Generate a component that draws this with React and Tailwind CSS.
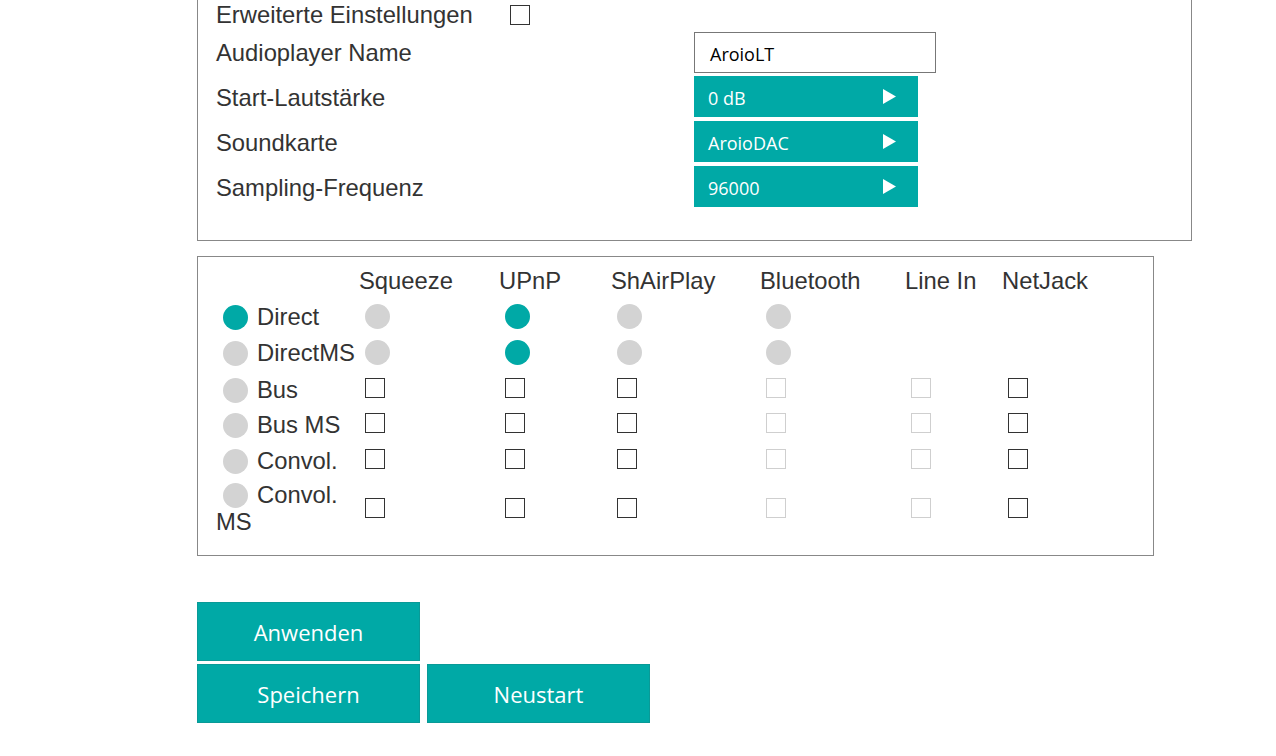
import React from 'react';

// Aroio settings panel: player options, routing matrix, action buttons

const TEAL = 'bg-[#00a9a6]';

function Box({ disabled }) {
  return (
    <span
      className={`block w-[20px] h-[20px] ml-[6px] bg-white border ${disabled ? 'border-[#cfcfcf]' : 'border-[#333]'}`}
    />
  );
}

function Dot({ on, className = '' }) {
  return (
    <span
      className={`inline-block w-[25px] h-[25px] rounded-full ${on ? TEAL : 'bg-[#d3d3d3]'} ${className}`}
    />
  );
}

function Select({ value }) {
  return (
    <div className={`w-[224px] h-[41px] ${TEAL} flex items-center justify-between pl-[14px] pr-[22px] text-white text-[18px]`}>
      <span className="pt-[3px]">{value}</span>
      <svg width="13" height="15" viewBox="0 0 13 15">
        <polygon points="0,0 13,7.5 0,15" fill="#fff" />
      </svg>
    </div>
  );
}

const cols = ['Squeeze', 'UPnP', 'ShAirPlay', 'Bluetooth', 'Line In', 'NetJack'];
// which columns are unavailable (greyed) for the checkbox rows
const greyed = [false, false, false, true, true, false];

const rows = [
  { name: 'Direct', on: true, kind: 'radio', radio: [false, true, false, false], h: 'h-[35px]' },
  { name: 'DirectMS', on: false, kind: 'radio', radio: [false, true, false, false], h: 'h-[36px]' },
  { name: 'Bus', on: false, kind: 'check', h: 'h-[35px]' },
  { name: 'Bus MS', on: false, kind: 'check', h: 'h-[36px]' },
  { name: 'Convol.', on: false, kind: 'check', h: 'h-[35px]' },
  { name: 'Convol. MS', on: false, kind: 'check', h: 'h-[64px]' },
];

export default function App() {
  const label = "text-[23.8px] text-[#333]";
  return (
    <div className="min-h-[756px] bg-white pl-[197px]" style={{ fontFamily: '"Liberation Sans", Arial, sans-serif' }}>
      {/* settings box, its top edge is scrolled off screen */}
      <div className="w-[995px] border-x border-b border-[#888] pl-[18px] pb-[33px]">
        <div className="h-[32px] flex items-center pb-[2px]">
          <span className={label}>Erweiterte Einstellungen</span>
          <span className="block w-[20px] h-[20px] border border-[#333] ml-[37px]" />
        </div>

        <div className="flex flex-col gap-[4px]" style={{ fontFamily: '"Open Sans", "Noto Sans", sans-serif' }}>
          <div className="flex items-center h-[41px] mb-[-1px]">
            <span className={`${label} w-[478px]`} style={{ fontFamily: '"Liberation Sans", Arial, sans-serif' }}>Audioplayer Name</span>
            <div className="w-[242px] h-[41px] border border-[#777] flex items-center pl-[15px] pt-[3px] text-[18px] text-black">AroioLT</div>
          </div>
          {[
            ['Start-Lautstärke', '0 dB'],
            ['Soundkarte', 'AroioDAC'],
            ['Sampling-Frequenz', '96000'],
          ].map(([k, v]) => (
            <div key={k} className="flex items-center h-[41px]">
              <span className={`${label} w-[478px] pt-[2px]`} style={{ fontFamily: '"Liberation Sans", Arial, sans-serif' }}>{k}</span>
              <Select value={v} />
            </div>
          ))}
        </div>
      </div>

      {/* routing matrix */}
      <div className="w-[957px] mt-[15px] border border-[#888] pl-[18px] pt-[6px] pb-[15px]">
        <div className={`grid grid-cols-[143px_140px_112px_149px_145px_97px_1fr] ${label}`}>
          <div className="h-[36px]" />
          {cols.map(c => (
            <div key={c} className="h-[36px] flex items-center">{c}</div>
          ))}

          {rows.map(r => (
            <React.Fragment key={r.name}>
              <div className={`${r.h} flex items-center`}>
                <div className={`leading-[27px] ${r.kind === 'check' && r.name !== 'Convol. MS' ? 'pt-[3px]' : ''}`}>
                  <Dot on={r.on} className="ml-[7px] mr-[9px] align-[-5px]" />
                  {r.name}
                </div>
              </div>
              {cols.map((c, i) => (
                <div key={c} className={`${r.h} flex items-center`}>
                  {r.kind === 'radio'
                    ? (i < 4 ? <Dot on={r.radio[i]} className="ml-[6px]" /> : null)
                    : <Box disabled={greyed[i]} />}
                </div>
              ))}
            </React.Fragment>
          ))}
        </div>
      </div>

      {/* actions */}
      <div className="mt-[46px] flex flex-col gap-[3px] text-white text-[22px]" style={{ fontFamily: '"Open Sans", "Noto Sans", sans-serif' }}>
        <div className="flex">
          <button className={`w-[223px] h-[59px] ${TEAL} border border-[#099a97] pt-[2px]`}>Anwenden</button>
        </div>
        <div className="flex gap-[7px]">
          <button className={`w-[223px] h-[59px] ${TEAL} border border-[#099a97] pt-[2px]`}>Speichern</button>
          <button className={`w-[223px] h-[59px] ${TEAL} border border-[#099a97] pt-[2px]`}>Neustart</button>
        </div>
      </div>
    </div>
  );
}
